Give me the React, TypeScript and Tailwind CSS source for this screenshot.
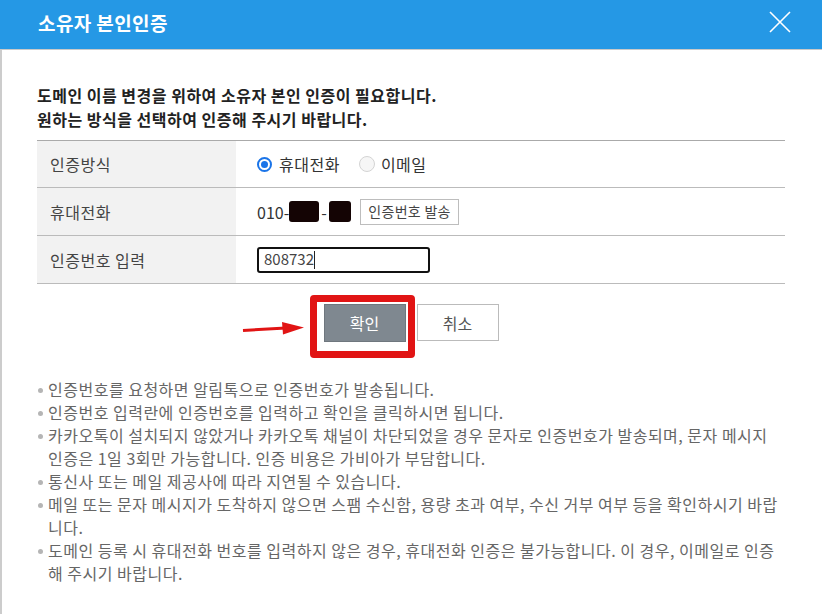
import React from "react";

const bullets: string[] = [
  "인증번호를 요청하면 알림톡으로 인증번호가 발송됩니다.",
  "인증번호 입력란에 인증번호를 입력하고 확인을 클릭하시면 됩니다.",
  "카카오톡이 설치되지 않았거나 카카오톡 채널이 차단되었을 경우 문자로 인증번호가 발송되며, 문자 메시지 인증은 1일 3회만 가능합니다. 인증 비용은 가비아가 부담합니다.",
  "통신사 또는 메일 제공사에 따라 지연될 수 있습니다.",
  "메일 또는 문자 메시지가 도착하지 않으면 스팸 수신함, 용량 초과 여부, 수신 거부 여부 등을 확인하시기 바랍니다.",
  "도메인 등록 시 휴대전화 번호를 입력하지 않은 경우, 휴대전화 인증은 불가능합니다. 이 경우, 이메일로 인증해 주시기 바랍니다.",
];

export default function App() {
  return (
    <div className="w-[822px] h-[614px] overflow-hidden bg-white flex flex-col [font-family:'Noto_Sans_CJK_KR','Noto_Sans',sans-serif]">
      {/* Header */}
      <div className="h-[49px] shrink-0 bg-[#2598e5] flex items-center justify-between pl-[38px] pr-[31px] pb-[5px]">
        <div className="text-white text-[19px] tracking-[0.4px] font-bold leading-none">소유자 본인인증</div>
        <svg width="22" height="22" viewBox="0 0 22 22" className="mb-[1px]">
          <path d="M1 1 L21 21 M21 1 L1 21" stroke="#ffffff" strokeWidth="1.6" fill="none" />
        </svg>
      </div>
      <div className="h-px bg-[#c9c9c9] shrink-0" />
      {/* Body */}
      <div className="flex-1 border-l-2 border-[#cccccc] pl-[35px] pr-[37px] pt-[33px]">
        <div className="text-[16px] tracking-[0.5px] font-bold text-[#222] leading-[24px]">
          <p>도메인 이름 변경을 위하여 소유자 본인 인증이 필요합니다.</p>
          <p>원하는 방식을 선택하여 인증해 주시기 바랍니다.</p>
        </div>

        {/* Table */}
        <div className="mt-[9px] border-t border-[#aaaaaa] text-[16px] tracking-[0.5px] text-[#444]">
          <div className="flex h-[47px] border-b border-[#bbbbbb]">
            <div className="w-[199px] bg-[#f2f2f2] flex items-center pl-[13px]">인증방식</div>
            <div className="flex-1 flex items-center pl-[21px] text-[#333]">
              <span className="w-[15px] h-[15px] rounded-full border-[2px] border-[#1a74e8] flex items-center justify-center">
                <span className="w-[7px] h-[7px] rounded-full bg-[#1a74e8]" />
              </span>
              <span className="ml-[7px]">휴대전화</span>
              <span className="ml-[19px] w-[16px] h-[16px] rounded-full border border-[#d4d4d4] bg-[#f6f6f6]" />
              <span className="ml-[6px]">이메일</span>
            </div>
          </div>
          <div className="flex h-[48px] border-b border-[#bbbbbb]">
            <div className="w-[199px] bg-[#f2f2f2] flex items-center pl-[13px]">휴대전화</div>
            <div className="flex-1 flex items-center pl-[21px] text-[#333]">
              <span className="tracking-normal">010-</span>
              <span className="w-[30px] h-[21px] rounded-[3px] bg-[#140404]" />
              <span className="mx-[2px]">-</span>
              <span className="w-[22px] h-[21px] rounded-[3px] bg-[#140404]" />
              <span className="ml-[9px] h-[26px] px-[7px] border border-[#bdbdbd] bg-white text-[14px] tracking-[0.3px] text-[#444] flex items-center">
                인증번호 발송
              </span>
            </div>
          </div>
          <div className="flex h-[48px] border-b border-[#bbbbbb]">
            <div className="w-[199px] bg-[#f2f2f2] flex items-center pl-[13px]">인증번호 입력</div>
            <div className="flex-1 flex items-center pl-[21px]">
              <div className="w-[173px] h-[26px] border-2 border-[#111] rounded-[3px] flex items-center pl-[5px] text-[15px] tracking-normal text-[#444]">
                808732<span className="w-px h-[18px] bg-[#222]" />
              </div>
            </div>
          </div>
        </div>

        {/* Buttons */}
        <div className="mt-[20px] flex justify-center gap-[11px]">
          <div className="relative">
            <button className="w-[82px] h-[38px] bg-[#7f8890] border border-[#6f777e] text-white text-[16px]">확인</button>
            <div className="absolute left-[-14px] top-[-9px] w-[105px] h-[63px] border-[7px] border-[#e11414] rounded-[4px] pointer-events-none" />
            <svg className="absolute left-[-82px] top-[16px]" width="64" height="16" viewBox="0 0 64 16">
              <path d="M1 10.5 L44 8" stroke="#e11414" strokeWidth="3" fill="none" />
              <path d="M40 2 L62 7.5 L41 14.5 Z" fill="#e11414" />
            </svg>
          </div>
          <button className="w-[82px] h-[37px] bg-white border border-[#bbbbbb] text-[#555] text-[16px]">취소</button>
        </div>

        {/* Bullets */}
        <ul className="mt-[36px] text-[16px] tracking-[0.5px] text-[#666] leading-[23px] break-all">
          {bullets.map((b, i) => (
            <li key={i} className="relative pl-[11px]">
              <span className="absolute left-[1px] top-[10px] w-[5px] h-[5px] rounded-full bg-[#b5b5b5]" />
              {b}
            </li>
          ))}
        </ul>
      </div>
    </div>
  );
}
